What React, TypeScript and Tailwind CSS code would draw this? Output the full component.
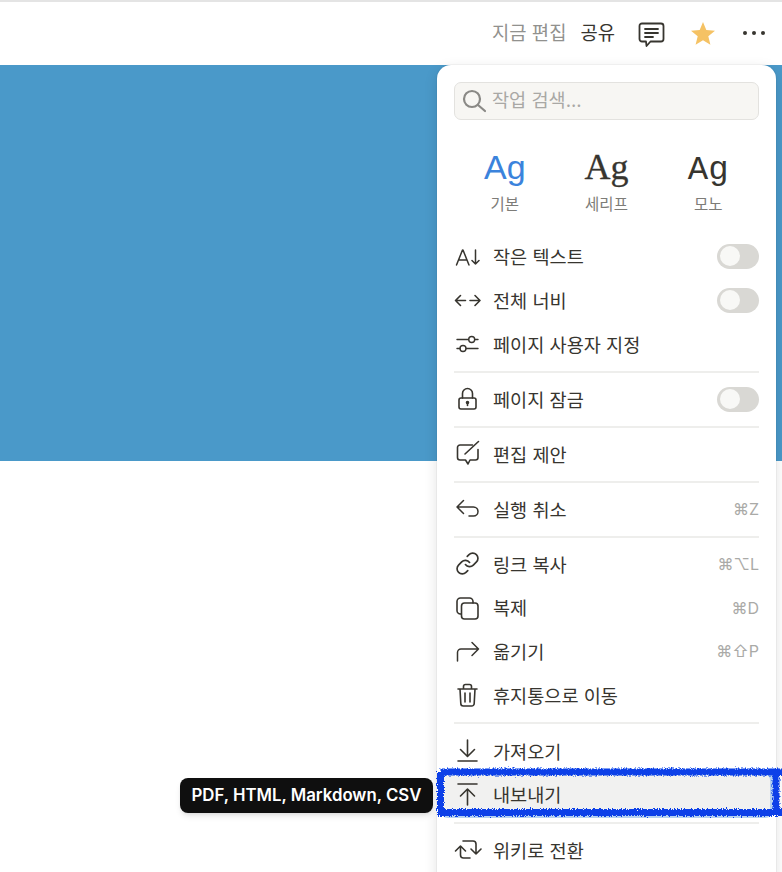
import React from "react";

const font = { fontFamily: '"Inter", "Noto Sans CJK KR", sans-serif' };

const S = ({ children, w = 1.5 }: { children: React.ReactNode; w?: number }) => (
  <svg width="28" height="28" viewBox="0 0 28 28" fill="none" stroke="#37352f" strokeWidth={w} strokeLinecap="round" strokeLinejoin="round">
    {children}
  </svg>
);

const icons: Record<string, React.ReactNode> = {
  small: (
    <S>
      <path d="M2.500 23 8.500 8h.5l6 15M4.500 18h8.500" />
      <path d="M21.500 8v14M18 18.500l3.500 3.500 3.500-3.500" />
    </S>
  ),
  width: (
    <S w={1.6}>
      <path d="M1.500 14.500h10M6.500 9.500l-5 5 5 5M16 14.500h10M21 9.500l5 5-5 5" />
    </S>
  ),
  sliders: (
    <S w={1.4}>
      <path d="M3 9.500h11.500M20.800 9.500H24M3 18.500h3M12.200 18.500H24" />
      <circle cx="17.700" cy="9.500" r="3" />
      <circle cx="9" cy="18.500" r="3" />
    </S>
  ),
  lock: (
    <S w={1.6}>
      <rect x="5" y="13" width="17" height="11" rx="2" />
      <path d="M8.500 13V8.500a5 5 0 0 1 10 0V13" />
      <circle cx="13.500" cy="17.500" r="1" fill="#37352f" />
      <path d="M13.500 18v2.500" />
    </S>
  ),
  suggest: (
    <S w={1.6}>
      <path d="M18.500 5H6a2.500 2.500 0 0 0-2.500 2.500v10A2.500 2.500 0 0 0 6 20h5.500l2.500 4 2-4h5.500a2.500 2.500 0 0 0 2.500-2.500V9.500" />
      <path d="M24.500 1.500 11 14" />
    </S>
  ),
  undo: (
    <S>
      <path d="M9.500 5.500 3 12l6.500 6.500M3 12h16.500a4.500 4.500 0 0 1 0 9H15" />
    </S>
  ),
  link: (
    <S w={1.6}>
      <g transform="translate(0.900 0.900) scale(1.050)">
        <path d="M10 13a5 5 0 0 0 7.540.54l3-3a5 5 0 0 0-7.070-7.070l-1.720 1.710" />
        <path d="M14 11a5 5 0 0 0-7.540-.54l-3 3a5 5 0 0 0 7.070 7.070l1.710-1.710" />
      </g>
    </S>
  ),
  copy: (
    <S w={1.6}>
      <path d="M7 20h-.5A3.500 3.500 0 0 1 3 16.500V7.500A3.500 3.500 0 0 1 6.500 4h9A3.500 3.500 0 0 1 19 7.500V9" />
      <rect x="7.500" y="9" width="16.500" height="16" rx="3" />
    </S>
  ),
  move: (
    <S>
      <path d="M3.500 24v-8.500A3.500 3.500 0 0 1 7 12h17.500M18 5.500l6.500 6.500-6.500 6.500" />
    </S>
  ),
  trash: (
    <S w={1.6}>
      <path d="M4 8h19M6 8l.8 14.500A2.500 2.500 0 0 0 9.300 25h8.400a2.500 2.500 0 0 0 2.500-2.500L21 8M9.500 8V5.500a2 2 0 0 1 2-2h4a2 2 0 0 1 2 2V8M11 12v9M16 12v9" />
    </S>
  ),
  import: (
    <S w={1.6}>
      <path d="M13.500 3v16M6.500 12.500l7 7 7-7M4 24h19" />
    </S>
  ),
  export: (
    <S w={1.6}>
      <path d="M4 4h19M13.500 25V9M6.500 16l7-7 7 7" />
    </S>
  ),
  wiki: (
    <S w={1.6}>
      <path d="M1.500 15l5-5 5 5M6.500 10v9a3 3 0 0 0 3 3H16" />
      <path d="M9 5h10a3 3 0 0 1 3 3v10M17 13l5 5 5-5" />
    </S>
  ),
};

const Toggle = () => (
  <div className="flex h-[25px] w-[42px] items-center rounded-full bg-[#d9d8d4] pl-[3px]">
    <div className="h-[20px] w-[20px] rounded-full bg-[#f8f8f6]" />
  </div>
);

const Row = ({ icon, label, right, cls = "h-[44px]" }: { icon: string; label: string; right?: React.ReactNode; cls?: string }) => (
  <div className={`flex items-center ${cls}`}>
    <div className="flex w-[39px] shrink-0 items-center">{icons[icon]}</div>
    <span className="flex-1 pt-[3px] text-[18.600px] text-[#37352f]">{label}</span>
    {right}
  </div>
);

const Key = ({ children }: { children: React.ReactNode }) => (
  <span className="text-[16px] text-[#aaaaa7]" style={{ fontFamily: '"Inter", "DejaVu Sans", sans-serif' }}>
    {children}
  </span>
);

const Sep = ({ cls = "h-[11px]" }: { cls?: string }) => (
  <div className={`flex items-center ${cls}`}>
    <div className="h-[2px] w-full bg-[#eeeeec]" />
  </div>
);

const Font = ({ face, label, cls, family }: { face: string; label: string; cls: string; family: string }) => (
  <div className="flex flex-1 flex-col items-center">
    <span className={cls} style={{ fontFamily: family }}>
      {face}
    </span>
    <span className="mt-[2px] text-[15.500px] leading-[24px] text-[#7d7c78]">{label}</span>
  </div>
);

export default function App() {
  return (
    <div className="relative h-[872px] w-[782px] overflow-hidden bg-white" style={font}>
      <div className="h-[2px] bg-[#e4e4e4]" />
      <header className="flex h-[63px] items-center justify-end pb-[1px]">
        <span className="pt-[2px] text-[18.800px] text-[#91918e]">지금 편집</span>
        <span className="ml-[14px] pt-[2px] text-[18.800px] text-[#37352f]">공유</span>
        <svg className="ml-[23px] mt-[3px]" width="27" height="27" viewBox="0 0 27 27" fill="none" stroke="#37352f" strokeWidth="1.800" strokeLinecap="round" strokeLinejoin="round">
          <path d="M4 2.500h19a2.500 2.500 0 0 1 2.500 2.500v13a2.500 2.500 0 0 1-2.500 2.500H12.500L8.500 25l-.5-4.500H4A2.500 2.500 0 0 1 1.500 18V5A2.500 2.500 0 0 1 4 2.500Z" />
          <path d="M7 8h13M7 12h13M7 16h8" />
        </svg>
        <svg className="ml-[25px] mt-[2px]" width="26" height="26" viewBox="0 0 26 26">
          <path fill="#f5c264" d="M13 1l3.300 8.100 8.700.6-6.700 5.600 2.100 8.500L13 19.200l-7.400 4.600 2.100-8.500L1 9.700l8.700-.6z" />
        </svg>
        <svg className="ml-[26px] mr-[16px]" width="24" height="6" viewBox="0 0 24 6" fill="#37352f">
          <circle cx="3" cy="3" r="2" />
          <circle cx="12" cy="3" r="2" />
          <circle cx="21" cy="3" r="2" />
        </svg>
      </header>
      <div className="h-[396px] bg-[#4a99c9]" />

      <div className="absolute left-[437px] top-[65px] h-[840px] w-[339px] rounded-t-[14px] bg-white px-[17px] pt-[17px] shadow-[0_0_0_1px_rgba(15,15,15,0.04),0_4px_14px_rgba(15,15,15,0.12)]">
        <div className="flex h-[38px] items-center rounded-[7px] border border-[#e3e2df] bg-[#f7f6f3] pl-[7px]">
          <svg width="24" height="24" viewBox="0 0 24 24" fill="none" stroke="#8a8986" strokeWidth="2.200" strokeLinecap="round">
            <circle cx="10" cy="10" r="8" />
            <path d="M16 16l7 6" />
          </svg>
          <span className="ml-[6px] text-[18.600px] text-[#a9a8a5]">작업 검색...</span>
        </div>
        <div className="mt-[23px] flex h-[72px]">
          <Font face="Ag" label="기본" cls="text-[34px] leading-[48px] text-[#3b83dc]" family='"Liberation Sans", sans-serif' />
          <Font face="Ag" label="세리프" cls="text-[36px] leading-[48px] text-[#37352f] [-webkit-text-stroke:0.3px_#37352f]" family='"Liberation Serif", serif' />
          <Font face="Ag" label="모노" cls="mt-[3px] h-[45px] text-[34px] leading-[48px] text-[#37352f]" family='"Liberation Mono", monospace' />
        </div>
        <div className="mt-[19px]">
          <Row icon="small" label="작은 텍스트" right={<Toggle />} />
          <Row icon="width" label="전체 너비" right={<Toggle />} />
          <Row icon="sliders" label="페이지 사용자 지정" />
          <Sep />
          <Row icon="lock" label="페이지 잠금" right={<Toggle />} />
          <Sep />
          <Row icon="suggest" label="편집 제안" />
          <Sep />
          <Row icon="undo" label="실행 취소" right={<Key>⌘Z</Key>} />
          <Sep />
          <Row icon="link" label="링크 복사" right={<Key>⌘⌥L</Key>} />
          <Row icon="copy" label="복제" right={<Key>⌘D</Key>} cls="h-[43px]" />
          <Row icon="move" label="옮기기" right={<Key>⌘⇧P</Key>} />
          <Row icon="trash" label="휴지통으로 이동" />
          <Sep cls="h-[12px]" />
          <Row icon="import" label="가져오기" />
          <div className="-mx-[11px] mt-[2px] h-[40px] rounded-[5px] bg-[#f1f1f0] px-[11px] ring-[3px] ring-[#b6d1f0]">
            <Row icon="export" label="내보내기" cls="h-[38px]" />
          </div>
          <div className="h-[2px]" />
          <Sep />
          <Row icon="wiki" label="위키로 전환" />
        </div>
      </div>

      <div className="absolute left-[180px] top-[778px] flex h-[35px] w-[253px] items-center justify-center rounded-[8px] bg-[#0f0f0f] text-[16.800px] font-semibold text-white shadow-md">
        PDF, HTML, Markdown, CSV
      </div>

      <svg className="absolute left-[430px] top-[760px]" width="352" height="64" viewBox="0 0 352 64" fill="none">
        <defs>
          <filter id="rough" x="-5%" y="-30%" width="110%" height="160%">
            <feTurbulence type="fractalNoise" baseFrequency="0.8" numOctaves="2" seed="4" />
            <feDisplacementMap in="SourceGraphic" scale="5" />
          </filter>
        </defs>
        <path d="M10.500 12H356M346 12V52.500M356 52.500H10.500V12" stroke="#0b3fe8" strokeWidth="7" filter="url(#rough)" />
      </svg>
    </div>
  );
}
